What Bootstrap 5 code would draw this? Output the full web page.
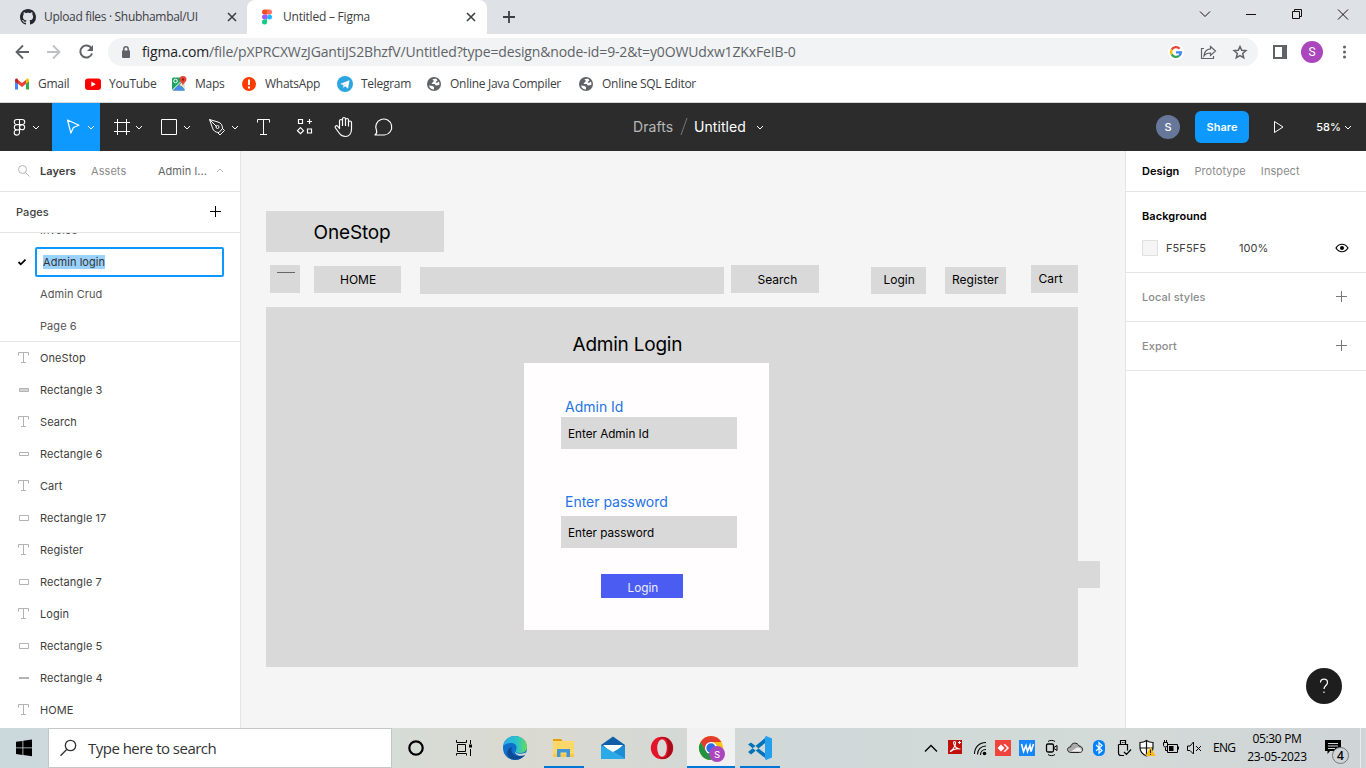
<!DOCTYPE html>
<html lang="en">
<head>
<meta charset="utf-8">
<meta name="viewport" content="width=device-width, initial-scale=1">
<title>Untitled – Figma</title>
<link rel="stylesheet" href="https://cdn.jsdelivr.net/npm/bootstrap@5.3.0/dist/css/bootstrap.min.css">
<style>
body{width:1366px;height:768px;overflow:hidden;font-family:"Open Sans","Noto Sans",sans-serif;font-size:12px;line-height:16px;color:#3c4043;background:#fff}
svg{display:block;flex:none}
.ink{fill:none;stroke:currentColor}
/* browser chrome */
.tabstrip{height:34px;background:#dee1e6;display:grid;grid-template-columns:247px 240px 44px 1fr 184px}
.tab-item{display:grid;align-items:center;height:34px}
.tab-idle{grid-template-columns:44px 176px 27px}
.tab-live{grid-template-columns:36px 176px 28px;background:#fff;border-radius:8px 8px 0 0}
.tab-idle .lbl{letter-spacing:-.32px}
.tab-live .lbl{letter-spacing:-.22px}
.addr{height:35px;display:grid;grid-template-columns:108px 1150px 108px}
.omni{height:28px;margin-top:4px;background:#f1f3f4;border-radius:14px;display:grid;grid-template-columns:34px 1fr 98px;align-items:center}
.url{font-size:14px;letter-spacing:-.145px;color:#5f6368}
.url b{font-weight:400;color:#202124}
.marks{height:34px;border-bottom:1px solid #d6d8da;padding-left:14px;display:grid;grid-template-columns:71px 86px 70px 96px 89px 152px 1fr;align-items:center;padding-bottom:4px}
.marks a{color:#3c4043;letter-spacing:-.28px;height:16px}
/* editor */
.fig{font-family:Inter,sans-serif;font-size:11px;letter-spacing:.07px;color:#404040}
.toolrow{height:48px;background:#2c2c2c;color:#fff;display:grid;grid-template-columns:52px repeat(4,48px) repeat(4,40px) 229px 523px 210px}
.crumb{font-size:14px;letter-spacing:.05px}
.btn-share{width:54px;height:32px;background:#0d99ff;color:#fff;font-size:11px;font-weight:600;border-radius:6px;padding:0;margin-left:15px}
.usr{width:24px;height:24px;background:#667799;font-size:11px;font-weight:500}
.work{height:577px;display:grid;grid-template-columns:241px 884px 241px}
.side{background:#fff;min-height:0;overflow:hidden}
.side-l{border-right:1px solid #e5e5e5}
.side-r{border-left:1px solid #e5e5e5}
.rule{border-bottom:1px solid #e5e5e5}
.h41{height:41px}
.h49{height:49px}
.h81{height:81px}
.dim{color:#8c8c8c}
.gap15{gap:15px}
.pagelist{height:109px;overflow:hidden}
.pagelist>div,.layer{height:32px;display:grid;grid-template-columns:40px 1fr;align-items:center}
.pagelist>div:first-child{margin-top:-19px}
.pagelist{color:#555}
.field{width:189px;height:30px;margin-left:-5px;border:2px solid #0d99ff;border-radius:2px;padding-left:6px;color:#333}
.field span{background:#99d1ff;line-height:14px}
.stage{background:#f5f5f5;position:relative;overflow:hidden;letter-spacing:0;color:#000}
/* free canvas: nodes are placed at their own coordinates */
.node{position:absolute;background:#d9d9d9}
.note{position:absolute;white-space:nowrap;line-height:20px;font-size:12px}
.n1{left:25px;top:60px;width:178px;height:41px}
.n2{left:29px;top:114px;width:30px;height:28px}
.n3{left:73px;top:115px;width:87px;height:27px}
.n4{left:179px;top:115.5px;width:304px;height:27px}
.n5{left:490px;top:114px;width:88px;height:27.5px}
.n6{left:630px;top:115.5px;width:55px;height:27px}
.n7{left:704px;top:115.5px;width:61px;height:27px}
.n8{left:790px;top:114px;width:47px;height:27.5px}
.n9{left:25px;top:156px;width:812px;height:360px}
.n10{left:283px;top:212px;width:245px;height:267px;background:#fffdfe}
.n11{left:320px;top:266px;width:176px;height:32px}
.n12{left:320px;top:365px;width:176px;height:32px}
.n13{left:360px;top:423px;width:82px;height:24px;background:#4b5cf3}
.n14{left:837px;top:410px;width:22px;height:27px}
.n15{left:36px;top:121px;width:17.5px;height:1px;background:#666}
.t1{left:72.5px;top:72px;font-size:19px;letter-spacing:-.15px}
.t2{left:99px;top:119px}
.t3{left:516.5px;top:118.5px}
.t4{left:642.5px;top:119px}
.t5{left:711px;top:119px}
.t6{left:797.5px;top:117.5px}
.t7{left:331.5px;top:183.5px;font-size:19px;letter-spacing:-.22px}
.t8{left:324px;top:246px;font-size:14px;color:#2373e6}
.t9{left:327px;top:272.5px;font-size:11.7px}
.t10{left:324px;top:341px;font-size:14px;color:#2373e6;letter-spacing:-.02px}
.t11{left:327px;top:371.5px;font-size:11.7px}
.t12{left:386.5px;top:427px;color:#eef;font-size:11.8px}
.help{right:24px;bottom:24px;width:36px;height:36px;background:#1e1e1e}
/* taskbar */
.taskbar{height:40px;background:linear-gradient(90deg,#cbd8dc 0,#d6dcd6 392px,#dad9d1 530px,#d6d9d3 640px,#d0d8d9 800px,#d1dad8 940px,#d3dad7 1120px,#cfd4d7 1366px);display:grid;grid-template-columns:48px 344px 48px 51px 49px 47px 52px 48px 48px 5px 40px 139px 24px 24px 24px 24px 24px 24px 24px 24px 24px 24px 24px 24px 30px 68px 46px 5px 1fr;color:#000}
.finder{background:#fff;border:1px solid #c3c6c7;display:grid;grid-template-columns:39px 1fr;align-items:center;font-size:15px;color:#333;letter-spacing:-.52px}
.clock{line-height:18px;letter-spacing:-.32px;position:relative;left:6px}
</style>
</head>
<body class="d-flex flex-column">
<header>
  <div class="tabstrip">
    <div class="tab-item tab-idle">
      <svg width="44" height="34" viewBox="0 0 44 34"><g transform="translate(20 9)"><path fill="#24292f" d="M8 0C3.58 0 0 3.58 0 8c0 3.54 2.29 6.53 5.47 7.59.4.07.55-.17.55-.38 0-.19-.01-.82-.01-1.49-2.01.37-2.53-.49-2.69-.94-.09-.23-.48-.94-.82-1.13-.28-.15-.68-.52-.01-.53.63-.01 1.08.58 1.23.82.72 1.21 1.87.87 2.33.66.07-.52.28-.87.51-1.07-1.78-.2-3.64-.89-3.64-3.95 0-.87.31-1.59.82-2.15-.08-.2-.36-1.02.08-2.12 0 0 .67-.21 2.2.82.64-.18 1.32-.27 2-.27s1.36.09 2 .27c1.53-1.04 2.2-.82 2.2-.82.44 1.1.16 1.92.08 2.12.51.56.82 1.27.82 2.15 0 3.07-1.87 3.75-3.65 3.95.29.25.54.73.54 1.48 0 1.07-.01 1.93-.01 2.2 0 .21.15.46.55.38A8.01 8.01 0 0 0 16 8c0-4.42-3.58-8-8-8z"/></g></svg>
      <span class="lbl">Upload files · Shubhambal/UI</span>
      <svg class="ink" width="27" height="34" viewBox="220 0 27 34"><path stroke-width="1.6" d="m228 13 8 8m0-8-8 8"/></svg>
    </div>
    <div class="tab-item tab-live">
      <svg width="36" height="34" viewBox="247 0 36 34"><path fill="#f24e1e" d="M267 9.500v5h-2.500a2.500 2.500 0 0 1 0-5z"/><path fill="#ff7262" d="M267 9.500h2.500a2.500 2.500 0 0 1 0 5H267z"/><path fill="#a259ff" d="M267 14.500v5h-2.500a2.500 2.500 0 0 1 0-5z"/><circle cx="269.500" cy="17" r="2.500" fill="#1abcfe"/><path fill="#0acf83" d="M267 19.500V22a2.500 2.500 0 1 1-2.500-2.500z"/></svg>
      <span class="lbl">Untitled – Figma</span>
      <svg class="ink" width="28" height="34" viewBox="459 0 28 34"><path stroke-width="1.6" d="m467 13 8 8m0-8-8 8"/></svg>
    </div>
    <svg class="ink" width="44" height="34" viewBox="487 0 44 34"><path stroke-width="1.8" d="M503 17h12m-6-6v12"/></svg>
    <span></span>
    <svg class="ink" width="184" height="34" viewBox="1182 0 184 34" color="#111"><path d="m1200 11.500 5 5 5-5M1246 14.500h10M1292.500 11.500h7v7h-7zM1294.500 11.500v-2h7v7h-2M1338 9.500l10 10m0-10-10 10"/></svg>
  </div>
  <div class="addr">
    <svg class="ink" width="108" height="35" viewBox="0 34 108 35" color="#5f6368"><path stroke-width="1.8" d="M29 52H16.500m6.500-6.500-6.500 6.500 6.500 6.500"/><path stroke="#bdc1c6" stroke-width="1.8" d="M47 52h12.500M53 45.500l6.500 6.500-6.500 6.500"/><path stroke-width="2" d="M91.500 48.500a6 6 0 1 0 .5 5"/><path fill="#5f6368" stroke="none" d="M93 45v6h-6z"/></svg>
    <div class="omni">
      <svg width="34" height="28" viewBox="108 38 34 28"><path fill="#5f6368" d="M122 50.500h8V57a1 1 0 0 1-1 1h-6a1 1 0 0 1-1-1z"/><path fill="none" stroke="#5f6368" stroke-width="1.500" d="M123.800 51v-2a2.200 2.200 0 0 1 4.400 0v2"/></svg>
      <span class="url"><b>figma.com</b>/file/pXPRCXWzJGantiJS2BhzfV/Untitled?type=design&amp;node-id=9-2&amp;t=y0OWUdxw1ZKxFeIB-0</span>
      <svg width="98" height="28" viewBox="1160 38 98 28" fill="none"><circle cx="1176" cy="52" r="8" fill="#fff"/><g stroke-width="2.300"><path stroke="#ea4335" d="M1179.600 48.700a4.900 4.900 0 0 0-7.900.9"/><path stroke="#fbbc05" d="M1171.700 49.600a4.900 4.900 0 0 0 0 4.800"/><path stroke="#34a853" d="M1171.700 54.400a4.900 4.900 0 0 0 7.300 1.500"/><path stroke="#4285f4" d="M1179 55.900a4.800 4.800 0 0 0 1.900-3.500H1176"/></g><g stroke="#5f6368" stroke-width="1.200"><path d="M1204 48.500h-2.500v10h12V56"/><path d="M1210.500 46.500l5 4.500-5 4.500V53c-3 0-5 .8-6.500 3 .3-4 2.500-6.800 6.500-7.200z"/><path stroke-width="1.500" d="m1240 46.500 1.700 3.800 4.200.4-3.200 2.800 1 4.200-3.700-2.200-3.700 2.200 1-4.200-3.200-2.800 4.200-.4z"/></g></svg>
    </div>
    <svg width="108" height="35" viewBox="1258 34 108 35"><path fill="#5f6368" d="M1273 45h14v14h-14z"/><path fill="#fff" d="M1275 47h7v10h-7z"/><circle cx="1312" cy="52" r="11" fill="#ab47bc"/><text x="1312" y="56" fill="#fff" text-anchor="middle" font-family="Roboto,sans-serif" font-size="12">S</text><g fill="#5f6368"><circle cx="1344.500" cy="47" r="1.500"/><circle cx="1344.500" cy="52" r="1.500"/><circle cx="1344.500" cy="57" r="1.500"/></g></svg>
  </div>
  <nav class="marks">
    <a class="d-flex gap-2 text-decoration-none"><svg width="16" height="16" viewBox="0 0 16 16"><path fill="#4285f4" d="M1 4v9.500h3V6z"/><path fill="#34a853" d="M12 6v7.500h3V4z"/><path fill="#ea4335" d="M3.500 3.500 8 7l4.500-3.500v4L8 11 3.500 7.500z"/><path fill="#c5221f" d="M1 4.200c0-1.500 1.500-2 2.500-1.200l.5.500v4.300L1 5.600z"/><path fill="#fbbc04" d="M15 4.200c0-1.500-1.500-2-2.500-1.200l-.5.500v4.300l3-2.200z"/></svg>Gmail</a>
    <a class="d-flex gap-2 text-decoration-none"><svg width="16" height="16" viewBox="0 0 16 16"><rect y="2.500" width="16" height="11.500" rx="3" fill="#f00"/><path fill="#fff" d="m6.300 5.600 4.500 2.600-4.500 2.600z"/></svg>YouTube</a>
    <a class="d-flex gap-2 text-decoration-none"><svg width="16" height="16" viewBox="0 0 16 16"><rect x="1" y="1.500" width="13" height="13" rx="1.500" fill="#1da462"/><path fill="#ffcf48" d="m3 14.500 11-11V7l-8 7.500z"/><path fill="#4a89f3" d="m2 14.500 6-6 6 6z"/><path fill="#e4e4e4" d="m9 8 5-3v9z"/><path stroke="#fff" d="m1 14.500 12-12"/><circle cx="4.500" cy="5" r="1.800" fill="none" stroke="#fff"/><path fill="#ea4335" d="M12 0a3.500 3.500 0 0 1 3.500 3.500C15.500 6 12.500 6.500 12 10c-.5-3.500-3.500-4-3.500-6.500A3.500 3.500 0 0 1 12 0z"/><circle cx="12" cy="3.500" r="1.200" fill="#8e1d16"/></svg>Maps</a>
    <a class="d-flex gap-2 text-decoration-none"><svg width="16" height="16" viewBox="0 0 16 16"><circle cx="8" cy="8" r="7" fill="#fe3b00"/><path stroke="#fff" stroke-width="2" d="M8 3.500V9m0 1.500v2"/></svg>WhatsApp</a>
    <a class="d-flex gap-2 text-decoration-none"><svg width="16" height="16" viewBox="0 0 16 16"><circle cx="8" cy="8" r="8" fill="#2ca5e0"/><path fill="#fff" d="m3 8 9.500-3.800L11 12.500 8 10.300l-1.500 1.500-.5-3z"/><path fill="#c8daea" d="m6 8.900 5-3.300-4 4-.5 2.200z"/></svg>Telegram</a>
    <a class="d-flex gap-2 text-decoration-none"><svg width="16" height="16" viewBox="0 0 16 16"><circle cx="8" cy="8" r="7" fill="#5f6368"/><path fill="#fff" d="M3 9.500 6.500 10l1.500 1v2.500C5.500 13.500 3.500 12 3 9.500zM10.500 3c-1.500-.5-3-.3-4 .5L8 5 6.500 6.500l-1 1.500h3L10 9.500l3.300-.5c.3-1.500 0-2.500-.5-3.500L11 7 9.500 6l2-1.500z"/></svg>Online Java Compiler</a>
    <a class="d-flex gap-2 text-decoration-none"><svg width="16" height="16" viewBox="0 0 16 16"><circle cx="8" cy="8" r="7" fill="#5f6368"/><path fill="#fff" d="M3 9.500 6.500 10l1.500 1v2.500C5.500 13.500 3.500 12 3 9.500zM10.500 3c-1.500-.5-3-.3-4 .5L8 5 6.500 6.500l-1 1.500h3L10 9.500l3.300-.5c.3-1.500 0-2.500-.5-3.500L11 7 9.500 6l2-1.500z"/></svg>Online SQL Editor</a>
  </nav>
</header>

<div class="fig toolrow">
  <svg class="ink" width="52" height="48" viewBox="0 103 52 48"><path stroke-width="1.100" d="M19.500 119.500v13a2.650 2.650 0 1 1-2.650-2.650H19.500M19.500 119.500h-2.650a2.550 2.550 0 0 0 0 5.150h5.300a2.550 2.550 0 0 0 0-5.150zM19.500 124.700h-2.650a2.550 2.550 0 0 0 0 5.150M22.150 124.700a2.550 2.550 0 1 1-2.600 2.600 2.600 2.600 0 0 1 2.600-2.600z"/><path d="m33 126 3 3 3-3"/></svg>
  <svg class="ink" width="48" height="48" viewBox="52 103 48 48" style="background:#0d99ff"><path stroke-width="1.200" stroke-linejoin="round" d="m67.500 120 11.500 5.200-5.600 2.300-2.500 5.600z"/><path d="m88 126 3 3 3-3"/></svg>
  <svg class="ink" width="48" height="48" viewBox="100 103 48 48"><path d="M117.500 119v16M126.500 119v16M114 122.500h16M114 131.500h16M136 126l3 3 3-3"/></svg>
  <svg class="ink" width="48" height="48" viewBox="148 103 48 48"><path d="M161.500 119.500h15v15h-15zM184 126l3 3 3-3"/></svg>
  <svg class="ink" width="48" height="48" viewBox="196 103 48 48"><path d="m209.500 119.500 8.500 2.500c3 1 4.500 3 4.500 6.500l-3.500 4c-3.500 0-5.500-1.500-6.500-4.500zM209.500 119.500l7 7M222 128l2.500 2.500-4.500 4.500-2-2"/><circle cx="217.500" cy="127" r="1.500"/><path d="m232 126 3 3 3-3"/></svg>
  <svg class="ink" width="40" height="48" viewBox="244 103 40 48"><path d="M257.500 122.500v-3h12v3M263.500 119.500v15M260 134.500h7"/></svg>
  <svg class="ink" width="40" height="48" viewBox="284 103 40 48"><path stroke-width="1.200" d="M298.500 119.500h4v4h-4zM307.500 129h4v4h-4zM309.500 119v5M307 121.500h5M300.500 127.700l3 3-3 3-3-3z"/></svg>
  <svg class="ink" width="40" height="48" viewBox="324 103 40 48"><path stroke-width="1.200" stroke-linejoin="round" d="M339.500 128v-7c0-2 3-2 3 0v4.500-6.500c0-2 3-2 3 0v6.500-5.500c0-2 3-2 3 0v6-3.500c0-2 3-2 3 0v6.500c0 4.500-2.500 7.500-6 7.500-3 0-4.500-1-6-3l-4-5.500c-1-1.500.5-3 2-2l2 2.500z"/></svg>
  <svg class="ink" width="40" height="48" viewBox="363 103 40 48"><path stroke-width="1.200" stroke-linejoin="round" d="M374 135c1.700-1.500 2.200-2.700 1.500-4.500a8 8 0 1 1 8 4.500z"/></svg>
  <span></span>
  <div class="crumb d-flex align-items-center"><span style="color:#b8b8b8">Drafts</span>
    <svg class="ink" width="21" height="48" viewBox="674 103 21 48" color="#777"><path d="m688 118-6 17"/></svg>Untitled<svg class="ink" width="26" height="48" viewBox="747 103 26 48"><path d="m758 126 3 3 3-3"/></svg></div>
  <div class="d-flex align-items-center"><span class="usr rounded-circle d-flex align-items-center justify-content-center">S</span><button class="btn btn-share me-4">Share</button>
    <svg class="ink" width="12" height="16" viewBox="1273 119 12 16"><path d="M1274.500 121.500v11l8.500-5.500z"/></svg><span class="ms-auto" style="font-weight:500;margin-right:-2px">58%</span><svg class="ink" width="27" height="48" viewBox="1339 103 27 48"><path d="m1345 126 3 3 3-3"/></svg></div>
</div>

<main class="fig work">
  <aside class="side side-l">
    <div class="rule h41 d-flex align-items-center">
      <svg class="ink" width="40" height="40" viewBox="0 151 40 40" color="#b3b3b3"><circle cx="22.500" cy="169.500" r="4"/><path d="m25.500 172.500 4 4"/></svg>
      <b class="fw-semibold">Layers</b><span class="dim" style="margin-left:15px">Assets</span><span class="ms-auto" style="color:#666">Admin l...</span>
      <svg class="ink" width="33" height="40" viewBox="207 151 33 40" color="#b3b3b3"><path d="m217 172 3-3 3 3"/></svg>
    </div>
    <div class="rule h41 d-flex align-items-center ps-3 fw-medium"><span>Pages</span><svg class="ink ms-auto" width="40" height="40" viewBox="200 192 40 40" color="#000"><path d="M210 211.500h11M215.500 206v11"/></svg></div>
    <div class="pagelist rule">
      <div><i></i><span>Invoice</span></div>
      <div><svg class="ink" width="40" height="32" viewBox="0 246 40 32" color="#000"><path stroke-width="1.800" d="m18.500 262 2.300 2.300 4.700-4.700"/></svg><div class="field d-flex align-items-center"><span>Admin login</span></div></div>
      <div><i></i><span>Admin Crud</span></div>
      <div><i></i><span>Page 6</span></div>
    </div>
    <div id="layers"></div>
  </aside>

  <section class="stage">
    <div class="node n1"></div><div class="node n2"></div><div class="node n15"></div><div class="node n3"></div><div class="node n4"></div><div class="node n5"></div><div class="node n6"></div><div class="node n7"></div><div class="node n8"></div><div class="node n14"></div><div class="node n9"></div><div class="node n10"></div><div class="node n11"></div><div class="node n12"></div><div class="node n13"></div>
    <span class="note t1">OneStop</span><span class="note t2">HOME</span><span class="note t3">Search</span><span class="note t4">Login</span><span class="note t5">Register</span><span class="note t6">Cart</span>
    <span class="note t7">Admin Login</span><span class="note t8">Admin Id</span><span class="note t9">Enter Admin Id</span><span class="note t10">Enter password</span><span class="note t11">Enter password</span><span class="note t12">Login</span>
  </section>

  <aside class="side side-r position-relative">
    <div class="rule h41 d-flex align-items-center ps-3 gap15"><b class="fw-semibold text-black">Design</b><span class="dim">Prototype</span><span class="dim">Inspect</span></div>
    <div class="rule h81 ps-3 pt-3">
      <b class="fw-semibold text-black d-block">Background</b>
      <div class="d-flex align-items-center" style="height:48px"><svg width="24" height="16" viewBox="0 0 24 16"><path fill="#f5f5f5" stroke="#e1e1e1" d="M.5.5h15v15H.5z"/></svg><span style="width:73px">F5F5F5</span><span>100%</span>
      <svg class="ink ms-auto" width="34" height="16" viewBox="1332 240 34 16" color="#000"><path stroke-width="1.200" d="M1336 248c3-5 9-5 12 0-3 5-9 5-12 0z"/><circle cx="1342" cy="248" r="2" fill="#000" stroke="none"/></svg></div>
    </div>
    <div class="rule h49 d-flex align-items-center ps-3 dim fw-medium"><span>Local styles</span><svg class="ink ms-auto" width="34" height="16" viewBox="1332 289 34 16" color="#777"><path d="M1336 296.500h11M1341.500 291v11"/></svg></div>
    <div class="rule h49 d-flex align-items-center ps-3 dim fw-medium"><span>Export</span><svg class="ink ms-auto" width="34" height="16" viewBox="1332 338 34 16" color="#777"><path d="M1336 345.500h11M1341.500 340v11"/></svg></div>
    <svg class="help rounded-circle position-absolute ink" viewBox="0 0 36 36" color="#fff"><path stroke-width="1.200" d="M14.500 14.500c0-4.500 7-4.500 7 0 0 3-3.500 3-3.500 6.500M18 23.500v1.500"/></svg>
  </aside>
</main>

<footer class="taskbar">
  <svg width="48" height="40" viewBox="0 728 48 40"><path d="m16 741.800 6.500-.9v6.600H16zM23.300 740.800l8.700-1.200v7.900h-8.700zM16 748.300h6.500v6.600l-6.500-.9zM23.300 748.300H32v7.900l-8.700-1.200z"/></svg>
  <div class="finder"><svg class="ink" width="39" height="38" viewBox="49 729 39 38"><circle cx="70.500" cy="745.500" r="5.200" stroke-width="1.300"/><path stroke-width="1.300" d="m66.700 749.500-6.200 6.200"/></svg><span>Type here to search</span></div>
  <svg class="ink" width="48" height="40" viewBox="392 728 48 40"><circle cx="416" cy="748" r="6.700" stroke-width="2.200"/></svg>
  <svg class="ink" width="51" height="40" viewBox="440 728 51 40"><path d="M457.500 744.500h8v7h-8zM456.500 740v2.500h10V740M456.500 755.500v-2h10v2M470.500 740v4M470.500 749v7"/><path fill="#000" stroke="none" d="M469 744.500h3v3h-3z"/></svg>
  <svg width="49" height="40" viewBox="491 728 49 40"><defs><linearGradient id="eg" x1="0" x2="1"><stop offset="0" stop-color="#29a9e8"/><stop offset=".6" stop-color="#2cc3c8"/><stop offset="1" stop-color="#66dd57"/></linearGradient></defs><circle cx="515" cy="748" r="12" fill="#0d6fc9"/><path fill="url(#eg)" d="M503 747c0-6 5-11 12-11s12 5 12 11c0 4-3 6-7 6-3 0-5-1-4-3 2-4-1-7-5-7s-8 2-8 4z"/><path fill="#0c4a93" d="M512 747c-2 4 1 12 13 8-3 4-9 6-14 4-5-3-5-10 1-12z"/><path fill="#d8dbd5" d="M515 749.500c-1.500 3 4 6 11 3l-.5 2c-5 3-12 .5-10.500-5z"/></svg>
  <svg width="47" height="40" viewBox="540 728 47 40"><path fill="#e3a008" d="M553 739h8l2 2.500h-10z"/><path fill="#ffd869" d="M553 741h21v15h-21z"/><path fill="#f7c64a" d="M553 754h21v3h-21z"/><path fill="#3f97d8" d="M557 749h13v8h-3.500v-4.500h-6v4.500H557z"/><path fill="#0078d7" d="M544 766h40v2h-40z"/></svg>
  <svg width="52" height="40" viewBox="587 728 52 40"><path fill="#0f5fa8" d="m601 745 12-8.500 12 8.500v4h-24z"/><path fill="#fff" d="M603 745h20l-8 8h-4z"/><path fill="#2baae8" d="m601 745 24 14h-24z"/><path fill="#1b8fd6" d="m625 745-12 7 12 7z"/></svg>
  <svg width="48" height="40" viewBox="639 728 48 40"><ellipse cx="662" cy="748" rx="11.200" ry="11.300" fill="#e5142b"/><path fill="#a90b1b" d="M665 737.200a11.300 11.300 0 0 1 0 21.600c-3 .8-5-.5-6-2 7 3 9-1 9-8.800s-2-12-9-8.800c1-1.500 3-2.600 6-2z"/><ellipse cx="662" cy="748" rx="4.800" ry="8.700" fill="#d7dad6"/></svg>
  <svg width="48" height="40" viewBox="687 728 48 40"><path fill="#f0f1f0" d="M687 728h48v40h-48z"/><circle cx="711" cy="748" r="12" fill="#fbc116"/><path fill="#e33b2e" d="M700.600 742a12 12 0 0 1 20.800 0H711l-5.200 9z"/><path fill="#229342" d="M700.600 742a12 12 0 0 0 10.400 18l5.200-9h-10.400z"/><circle cx="711" cy="748" r="6" fill="#fff"/><circle cx="711" cy="748" r="4.700" fill="#2a6ee8"/><circle cx="717" cy="754" r="8" fill="#ab47bc"/><text x="717" y="757.500" fill="#fff" text-anchor="middle" font-family="Roboto,sans-serif" font-size="9.500">S</text><path fill="#0078d7" d="M687 766h48v2h-48z"/></svg>
  <i></i>
  <svg width="40" height="40" viewBox="740 728 40 40"><path fill="#0073b8" d="m748 744.500 3-2 16 12.500v4.500zM748 752l3 2.500 16-13v-5z"/><path fill="#249fee" d="m766 736 6 2.500v19l-6 2.500-1-1V737z"/><path fill="#0078d7" d="M740 766h40v2h-40z"/></svg>
  <i></i>
  <svg class="ink" width="24" height="40" viewBox="919 728 24 40"><path stroke-width="1.300" d="m925 751.500 6-6 6 6"/></svg>
  <svg width="24" height="40" viewBox="943 728 24 40"><path fill="#c0100c" d="M948 740h14v14h-14z"/><path fill="none" stroke="#fff" stroke-width="1.100" d="M950 751.500c5-3 7-10 4.500-10s.5 7 4.500 7.500-4-2-8.500 2.500"/><path fill="none" stroke="#fff" d="M959.500 741v3M958 742.500h3"/></svg>
  <svg class="ink" width="24" height="40" viewBox="967 728 24 40"><path stroke-width="1.100" d="M974.500 754c0-7 5-11.500 11.500-11.500M977.500 754.500c0-5 3.500-8.500 8.500-8.500M980.500 755c0-3 2-5.500 5.500-5.500"/><circle cx="984.500" cy="753.500" r="1.800" fill="#000" stroke="none"/></svg>
  <svg width="24" height="40" viewBox="991 728 24 40"><path fill="#ef443b" d="M995 740h16v16h-16z"/><path fill="#fff" d="m1001 744.500 3.500 3.500-3.500 3.500-3.500-3.500zM1003.500 744.500l1.500-.5 4 4-4 4-1.500-.5 3.500-3.500z"/></svg>
  <svg width="24" height="40" viewBox="1015 728 24 40"><path fill="#1686ff" d="M1019 740h16v16h-16z"/><path fill="none" stroke="#fff" stroke-width="1.600" d="m1021.500 744 2 7.500 2.500-6 1.500 6 2.500-6 1 6 2.500-7.500"/></svg>
  <svg class="ink" width="24" height="40" viewBox="1039 728 24 40"><rect x="1046.500" y="744" width="7" height="8" rx="1.500" stroke-width="1.300"/><path d="m1054 747.500 3-2v5l-3-2M1048 741.500c2-1.500 5-1.500 7 0M1048 754.500c2 1.500 5 1.500 7 0"/></svg>
  <svg width="24" height="40" viewBox="1063 728 24 40"><path fill="#aaa" stroke="#222" d="M1070.500 752.500c-4-.5-4-5.500 0-5.500 1-5 7-5 8.500-1 5 .5 4.500 6.500.5 6.500z"/><path fill="#eee" d="m1071 751.500 6-4c3-.5 4.500 1.500 4.500 4z"/></svg>
  <svg width="24" height="40" viewBox="1087 728 24 40"><rect x="1093" y="740" width="12" height="16" rx="5.500" fill="#0082fc"/><path fill="none" stroke="#fff" stroke-width="1.200" d="m1096 745 6 5.500-3 2.700v-10.500l3 2.700-6 5.500"/></svg>
  <svg class="ink" width="24" height="40" viewBox="1111 728 24 40"><path stroke-width="1.200" d="M1120.500 744.500v-4h5v4M1118.500 744.500h9v6M1118.500 744.500v8.500c0 1.500 1 2.500 2.500 2.500h3M1122 742.500h.8m.8 0h.8M1124 752l2.500 2.500 4.500-5"/></svg>
  <svg width="24" height="40" viewBox="1135 728 24 40"><path fill="#fff" stroke="#111" stroke-width="1.200" d="M1146.500 740.500c2 1.500 4 2 6.500 2v5c0 4-3 7-6.500 8.500-3.500-1.500-6.500-4.500-6.500-8.500v-5c2.500 0 4.500-.5 6.500-2zM1146.500 740.500v15M1140 748h13"/><path fill="#fcb813" d="m1150.500 746.500 5 9.500h-10z"/><path stroke="#222" d="M1150.500 749.500v3.500m0 1v1"/></svg>
  <svg class="ink" width="24" height="40" viewBox="1159 728 24 40"><path d="M1167.500 744.500h10v8h-10zM1178.500 746.500v3M1163.500 742.500h4v3c0 2-4 2-4 0zM1164.500 740v2.500M1166.500 740v2.500M1165.500 747.500v3h2"/><path fill="#000" stroke="none" d="M1169 746h4.500v5h-4.500z"/></svg>
  <svg class="ink" width="24" height="40" viewBox="1183 728 24 40"><path d="M1187.500 746v4.500h2.500l3.500 3.500v-12l-3.500 4zM1196 746l5 5m0-5-5 5"/></svg>
  <span class="align-self-center ps-2" style="letter-spacing:-.7px;margin-left:-2px">ENG</span>
  <div class="clock text-center align-self-center text-nowrap">05:30 PM<br>23-05-2023</div>
  <svg width="46" height="40" viewBox="1305 728 46 40"><path d="M1325 740h16v11h-11l-2.500 3v-3h-2.500z"/><path stroke="#d2d8da" stroke-width="1.100" d="M1328 743.500h10M1328 746h10M1328 748.500h7"/><circle cx="1340.500" cy="755.500" r="8" fill="#cfd4d7" stroke="#777"/><text x="1340.500" y="760" text-anchor="middle" font-family="Open Sans,sans-serif" font-size="12" font-weight="600">4</text></svg>
  <i></i>
  <i class="border-start border-secondary-subtle ms-1"></i>
</footer>

<script src="https://cdn.jsdelivr.net/npm/bootstrap@5.3.0/dist/js/bootstrap.bundle.min.js"></script>
<script>
const icons={
  text:'<path d="M18.500 13.500v-3h10v3M23.500 10.500v10M21 20.500h5"/>',
  fill:'<path fill="#d4d4d4" d="M19.500 14.500h9v3h-9z"/>',
  thin:'<path d="M19.500 14.500h9v3h-9z"/>',
  rect:'<path d="M19.500 13.500h9v5h-9z"/>',
  line:'<path stroke-width="2" d="M19 16h10"/>'
};
const layers=[["text","OneStop"],["fill","Rectangle 3"],["text","Search"],["thin","Rectangle 6"],["text","Cart"],["rect","Rectangle 17"],["text","Register"],["rect","Rectangle 7"],["text","Login"],["rect","Rectangle 5"],["line","Rectangle 4"],["text","HOME"]];
document.getElementById('layers').innerHTML=layers.map(([k,n])=>`<div class="layer"><svg class="ink" width="40" height="32" viewBox="0 0 40 32" color="#b3b3b3">${icons[k]}</svg><span>${n}</span></div>`).join('');
</script>
</body>
</html>
